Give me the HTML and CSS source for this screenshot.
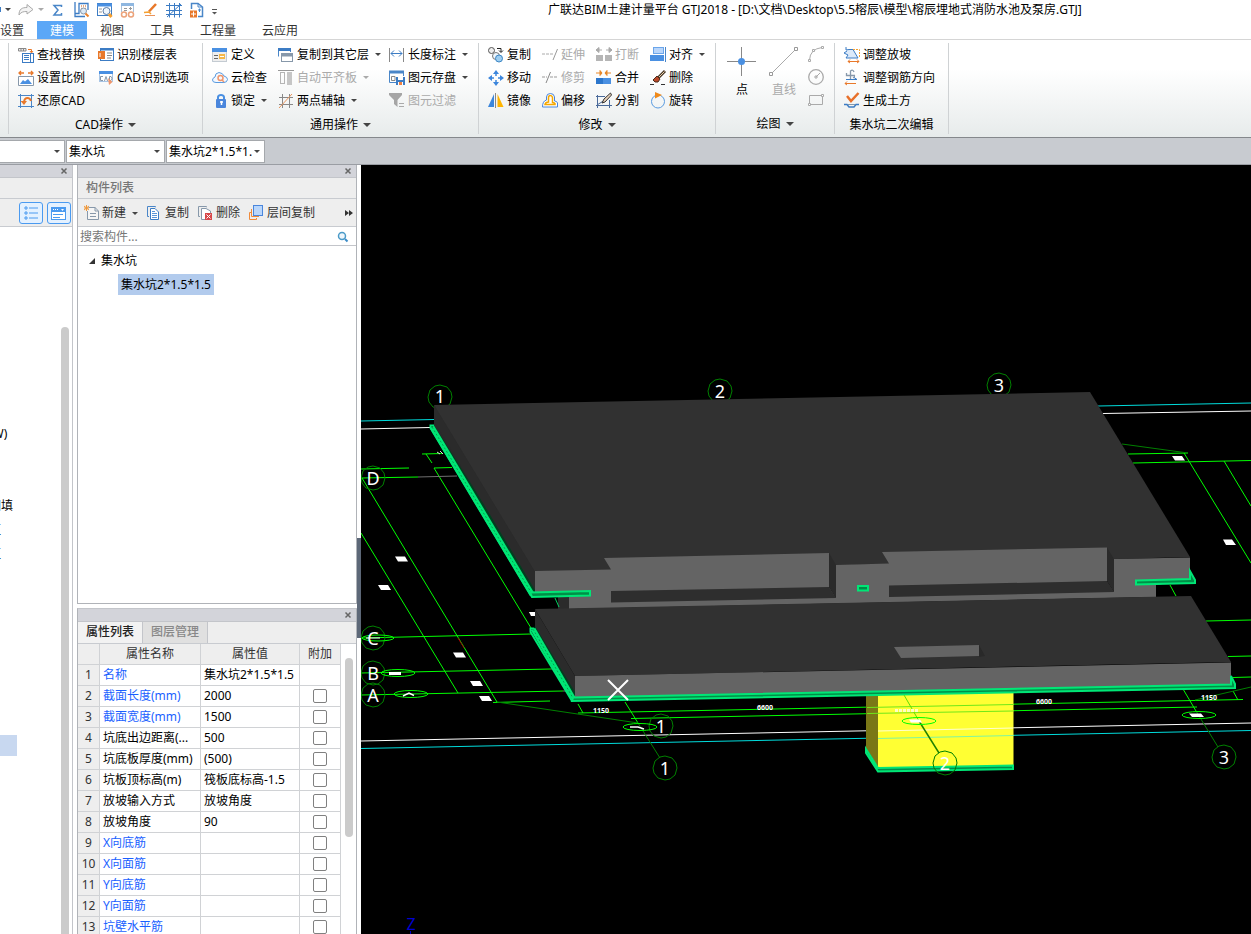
FILE: index.html
```html
<!DOCTYPE html>
<html lang="zh-CN">
<head>
    <meta charset="UTF-8">
    <meta name="viewport" content="width=device-width, initial-scale=1.0">
    <title>广联达BIM土建计量平台 GTJ2018</title>
    <link rel="stylesheet" href="styles.css">
</head>
<body>

<header class="titlebar">
    <div class="quick">
        <span class="sliver"></span>
        <span class="caret"></span>
        <button type="button" aria-label="重做"><svg class="icon" viewBox="0 0 16 16"><path d="M1 13C1 7 4 5.500 9 5.500V2.500L15 7.500L9 12V9.500C5 9.500 3 10 1 13Z" fill="#f4f4f4" stroke="#aaa"/></svg></button>
        <span class="caret light"></span>
        <button type="button" class="sum" aria-label="汇总"><svg class="icon" viewBox="0 0 16 16"><path d="M10.500 5V3.500H3L7 8L3 13H10.500V11" fill="none" stroke="#4a86c8" stroke-width="1.500"/></svg></button>
        <button type="button" aria-label="查看计算式"><svg class="icon" viewBox="0 0 16 16"><path d="M1 0V14.500H11M1 11.500H5V1.500H14V8" fill="none" stroke="#3c7cc4" stroke-width="1.300"/><path d="M7 4H13M7 6.500H13" stroke="#d88d5a" stroke-width="1.500" stroke-dasharray="1 1"/><circle cx="9.500" cy="9" r="3" fill="#dce9f5" stroke="#8798aa"/><path d="M11.500 11.500L14.500 14.500" stroke="#f0832a" stroke-width="2"/></svg></button>
        <button type="button" aria-label="查看工程量"><svg class="icon" viewBox="0 0 16 16"><rect x=".5" y="1.500" width="14" height="12" fill="#fff" stroke="#3c7cc4"/><path d="M0 3H15" stroke="#4a90e2" stroke-width="3"/><path d="M2 7H5M2 10H5" stroke="#999"/><circle cx="9.500" cy="9" r="3.500" fill="#eef5fc" stroke="#5a7ca8"/><path d="M12 12L14.500 15" stroke="#f5a030" stroke-width="3"/></svg></button>
        <button type="button" aria-label="预览"><svg class="icon" viewBox="0 0 16 16"><path d="M1.500 10V1.500H13.500V10" fill="none" stroke="#a9c2db"/><path d="M1 2.500H14" stroke="#8fb7e0" stroke-width="3"/><path d="M4 6.500H7M4 8.500H7M9 6.500H12M10.500 5V8" stroke="#999"/><circle cx="4" cy="12.500" r="2.500" fill="#fff" stroke="#eba27a" stroke-width="1.500"/><circle cx="11" cy="12.500" r="2.500" fill="#fff" stroke="#eba27a" stroke-width="1.500"/></svg></button>
        <button type="button" aria-label="画笔"><svg class="icon" viewBox="0 0 16 16"><path d="M13 2L6 9.500" stroke="#e8782a" stroke-width="2.500"/><path d="M1 10.500L6 10L8 12" stroke="#f5a030" stroke-width="1.500" fill="none"/><path d="M2 13.500H12" stroke="#e9935c"/></svg></button>
        <button type="button" aria-label="轴网"><svg class="icon" viewBox="0 0 16 16"><path d="M3.500 1V15.500M8.500 1V15.500M13.500 1V15.500M0 3.500H16M0 8.500H16M0 12.500H16M1 15L15 2" stroke="#3c7cc4" fill="none"/></svg></button>
        <button type="button" aria-label="新建楼层"><svg class="icon" viewBox="0 0 16 16"><path d="M2.500 7V1.500H9L13.500 5V14.500H9" fill="#fff" stroke="#4a86c8" stroke-width="1.500"/><path d="M9 1V5H13M9 8H12M10.500 6.500V10" stroke="#4a86c8" fill="none"/><rect x="1" y="8.500" width="7" height="7" fill="#e8782a"/><path d="M2 12H7M4.500 9.500V14.500" stroke="#fff"/></svg></button>
        <button type="button" aria-label="更多"><svg class="icon" viewBox="0 0 16 16"><path d="M0 7.500H5" stroke="#555"/><path d="M0 10H5L2.500 12.500Z" fill="#555"/></svg></button>
    </div>
    <h1>广联达BIM土建计量平台 GTJ2018 - [D:\文档\Desktop\5.5榕辰\模型\榕辰埋地式消防水池及泵房.GTJ]</h1>
</header>

<nav class="tabs">
    <a href="#">设置</a>
    <a href="#" class="active">建模</a>
    <a href="#">视图</a>
    <a href="#">工具</a>
    <a href="#">工程量</a>
    <a href="#">云应用</a>
</nav>

<section class="ribbon">
    <div class="group edge"></div>

    <div class="group">
        <div class="tools cad">
            <button type="button"><svg class="icon" viewBox="0 0 16 16"><path d="M.5 1.500H8V4H.5ZM3 1.500V4M5.500 1.500V4" fill="#eee" stroke="#888"/><path d="M10 2.500H13.500V5M12 4L13.500 6L15 4" stroke="#e8782a" fill="none"/><rect x="4.500" y="6.500" width="11" height="9" fill="#fff" stroke="#3c7cc4"/><path d="M6 8.500H11M6 10.500H11M6 12.500H11M12.500 7V15" stroke="#3c7cc4"/></svg>查找替换</button>
            <button type="button"><svg class="icon" viewBox="0 0 16 16"><rect x="2.500" y="1.500" width="13" height="12" fill="#fff" stroke="#3c7cc4"/><path d="M2 2.500H16" stroke="#3c7cc4" stroke-width="2"/><path d="M9 6H14M9 8.500H14M9 11H13" stroke="#888"/><rect x="1" y="5" width="5" height="6" fill="#e8782a" stroke="#e8782a" stroke-width="2"/><path d="M2 6V10" stroke="#fff"/></svg>识别楼层表</button>
            <button type="button"><svg class="icon" viewBox="0 0 16 16"><path d="M1 3H6M10 3H15M3 1L1 3L3 5M13 1L15 3L13 5" stroke="#e8782a" stroke-width="1.300" fill="none"/><path d="M.5 6.500V15.500H15.500V6.500Z" fill="#fff" stroke="#8798aa"/><path d="M2 14L5 10L7 11.500L10 9L14 14Z" fill="#4a90e2"/></svg>设置比例</button>
            <button type="button"><svg class="icon" viewBox="0 0 16 16"><rect x="1.500" y="1.500" width="13" height="10" fill="#fff" stroke="#a9c6e6"/><path d="M1 2.500H15" stroke="#4a90e2" stroke-width="3"/><path d="M5 6.500H2.500V10.500H5M6.500 11L8 6.500L9.500 11M11.500 6.500V10.500H13L14 9V8L13 6.500Z" stroke="#8798aa" fill="none"/><path d="M10 8L14.500 12L11 15Z" fill="#f0966b"/></svg>CAD识别选项</button>
            <button type="button"><svg class="icon" viewBox="0 0 16 16"><path d="M2.500 1V15M13.500 1V15M0 2.500H16M0 13.500H16" stroke="#4a86c8"/><path d="M13 8Q12 5 9.500 5Q6.500 5 6 9" fill="none" stroke="#e8782a" stroke-width="2"/><path d="M2.500 8H9L6 12Z" fill="#e8782a"/></svg>还原CAD</button>
        </div>
        <button type="button" class="group-name">CAD操作<span class="caret big"></span></button>
    </div>

    <div class="group">
        <div class="tools common">
            <button type="button"><svg class="icon" viewBox="0 0 16 16"><rect x=".5" y="1.500" width="14" height="13" fill="#eee" stroke="#c4cbd2"/><rect x="0" y="1" width="15" height="4" fill="#4a90e2"/><path d="M2 8.500H6M2 11.500H6" stroke="#666"/><path d="M7 7H13V12H7Z" fill="#f5b84a"/><path d="M8 9.500H12" stroke="#fff"/></svg>定义</button>
            <button type="button"><svg class="icon" viewBox="0 0 16 16"><path d="M.5 9.500V1.500H12.500V5" fill="#fff" stroke="#4a86c8"/><path d="M0 2.500H13" stroke="#3c7cc4" stroke-width="3"/><rect x="3.500" y="6.500" width="11" height="8" fill="#fff" stroke="#8798aa"/><path d="M3 8H15" stroke="#8798aa" stroke-width="3"/></svg>复制到其它层<span class="caret"></span></button>
            <button type="button"><svg class="icon" viewBox="0 0 16 16"><path d="M.5 1V15M14.500 1V15" stroke="#888"/><path d="M2 6.500H13M5 3.500L2 6.500L5 9.500M10 3.500L13 6.500L10 9.500" stroke="#3c7cc4" fill="none"/></svg>长度标注<span class="caret"></span></button>
            <button type="button"><svg class="icon" viewBox="0 0 16 16"><path d="M4 12.500Q.5 12.500 .5 10Q.5 8 3 7Q3 3 7 2.500Q11 3 12 6Q15.500 7 15.500 9.500Q15 12.500 12 12.500Z" fill="#f4f9ff" stroke="#5a9be0"/><circle cx="8.500" cy="8" r="2.500" fill="none" stroke="#f0966b" stroke-width="1.500"/><path d="M10 10L12 12" stroke="#f0966b" stroke-width="1.500"/></svg>云检查</button>
            <button type="button" disabled><svg class="icon" viewBox="0 0 16 16"><path d="M0 .5H16" stroke="#999"/><rect x="2.500" y="2.500" width="4" height="11" fill="none" stroke="#b5b5b5"/><rect x="9" y="2" width="5" height="13" fill="#c6c6c6"/></svg>自动平齐板<span class="caret light"></span></button>
            <button type="button"><svg class="icon" viewBox="0 0 16 16"><path d="M7 12.500H.5V1.500H14.500V6" fill="#fff" stroke="#4a86c8"/><path d="M0 2H15" stroke="#4a86c8" stroke-width="3"/><path d="M2.500 6.500H6V10.500H2.500Z" fill="none" stroke="#888"/><rect x="7" y="7" width="9" height="8" fill="#3c7cc4"/><rect x="9" y="7" width="5" height="3" fill="#fff"/><rect x="9" y="12" width="5" height="3" fill="#fff"/><rect x="10" y="12" width="3" height="3" fill="#f08040"/></svg>图元存盘<span class="caret"></span></button>
            <button type="button"><svg class="icon" viewBox="0 0 16 16"><path d="M6 7V4Q6.500 2 9 2Q11.500 2 12 4V7" fill="none" stroke="#4a90e2" stroke-width="2"/><rect x="4" y="6" width="10" height="9" rx="1" fill="#4a86dc"/><path d="M9.500 8V12M8 9H11" stroke="#fff" stroke-width="1.500"/></svg>锁定<span class="caret"></span></button>
            <button type="button"><svg class="icon" viewBox="0 0 16 16"><path d="M4.500 1V15M11.500 1V15M1 4.500H15M1 11.500H15" stroke="#888"/><path d="M1 15L14 1" stroke="#e8945c"/></svg>两点辅轴<span class="caret"></span></button>
            <button type="button" disabled><svg class="icon" viewBox="0 0 16 16"><path d="M0 0H13V2L8.500 7V14L5 11V7L0 2Z" fill="#a5a5a5"/><path d="M10 10.500H15M10 13.500H15" stroke="#aaa"/></svg>图元过滤</button>
        </div>
        <button type="button" class="group-name">通用操作<span class="caret big"></span></button>
    </div>

    <div class="group">
        <div class="tools modify">
            <button type="button"><svg class="icon" viewBox="0 0 16 16"><circle cx="3.500" cy="3.500" r="3" fill="#eee" stroke="#555"/><path d="M9 1.500H13V5M11 3.500L13 5.500L15 3.500" fill="none" stroke="#222"/><circle cx="8" cy="9" r="3.500" fill="#eef6fd" stroke="#777"/><circle cx="11" cy="11.500" r="3.500" fill="#9dcdf0" stroke="#3c86c4"/></svg>复制</button>
            <button type="button" disabled><svg class="icon" viewBox="0 0 16 16"><path d="M0 7H11" stroke="#aaa" stroke-dasharray="3 1"/><path d="M11 13L15.500 2" stroke="#999"/></svg>延伸</button>
            <button type="button" disabled><svg class="icon" viewBox="0 0 16 16"><path d="M0 3H6M10 3H16M3 .5L0 3L3 5.500ZM13 .5L16 3L13 5.500Z" stroke="#aaa" fill="#aaa"/><rect x="0" y="8" width="7" height="6" fill="#b5b5b5"/><rect x="9" y="8" width="7" height="6" fill="#b5b5b5"/></svg>打断</button>
            <button type="button"><svg class="icon" viewBox="0 0 16 16"><path d="M15.500 0V15" stroke="#4a86c8"/><rect x="3.500" y=".5" width="10" height="6" fill="#b9d6fb" stroke="#6aa5ea"/><rect x="0" y="8" width="14" height="6" fill="#4a90e2"/></svg>对齐<span class="caret"></span></button>
            <button type="button"><svg class="icon" viewBox="0 0 16 16"><path d="M8 0L11 4H5ZM8 16L5 12H11ZM0 8L4 5V11ZM16 8L12 11V5Z" fill="#3c86dc"/><path d="M8 3V6M8 10V13M3 8H6M10 8H13" stroke="#3c86dc" stroke-width="1.500"/></svg>移动</button>
            <button type="button" disabled><svg class="icon" viewBox="0 0 16 16"><path d="M0 7H5M8 7H16" stroke="#999" stroke-dasharray="3 1"/><path d="M4 13L8.500 2" stroke="#888"/></svg>修剪</button>
            <button type="button"><svg class="icon" viewBox="0 0 16 16"><path d="M0 3H6M9 3H15M4 .5L6 3L4 5.500ZM11 .5L9 3L11 5.500Z" stroke="#e8882a" fill="#e8882a"/><rect x="0" y="8" width="7" height="6" fill="#2c76cc"/><rect x="7" y="8" width="8" height="6" fill="#4a90e2"/></svg>合并</button>
            <button type="button"><svg class="icon" viewBox="0 0 16 16"><path d="M15 1L8 8" stroke="#4a3a2a" stroke-width="3"/><path d="M14.500 1.500L8 8" stroke="#e8d0a8"/><path d="M7 6L10 9L8 12L5 12L3 10Z" fill="#b8492a" stroke="#4a2a1a"/><path d="M0 14.500H4M11 14.500H15" stroke="#333"/></svg>删除</button>
            <button type="button"><svg class="icon" viewBox="0 0 16 16"><path d="M6 1V14H0Z" fill="#3c86dc"/><path d="M9.500 1V14H15.500Z" fill="#ffb400"/><path d="M7.500 0V15" stroke="#888"/></svg>镜像</button>
            <button type="button"><svg class="icon" viewBox="0 0 16 16"><path d="M.5 14H15.500V10Q15 8 12.500 8V4Q12 .5 8.500 .5Q4.500 .5 4.500 4V7Q.5 8 .5 14Z" fill="#fff" stroke="#4a86dc"/><path d="M3 11.500H13V10.500Q12 9.500 10.500 9.500V4.500Q10 2.500 8.500 2.500Q6.500 2.500 6.500 4.500V9Q3.500 9 3 11.500Z" fill="#fff" stroke="#f5a800" stroke-width="1.500"/></svg>偏移</button>
            <button type="button"><svg class="icon" viewBox="0 0 16 16"><path d="M0 3.500H9M1.500 2V15M0 12.500H16M13.500 7V15" stroke="#4a6a9a"/><path d="M1 12L12 5" stroke="#4a6a9a"/><path d="M14.500 0L8 6L6 10L9 9L15.500 2Z" fill="#e8d0b8" stroke="#333"/></svg>分割</button>
            <button type="button"><svg class="icon" viewBox="0 0 16 16"><circle cx="8" cy="8.500" r="6.500" fill="none" stroke="#5a9be0"/><path d="M5 -1L12 2L5 5.500Z" fill="#f08a1a"/></svg>旋转</button>
        </div>
        <button type="button" class="group-name">修改<span class="caret big"></span></button>
    </div>

    <div class="group">
        <div class="draw">
            <button type="button" class="tall"><svg viewBox="0 0 30 30"><path d="M14.500 0V29M0 14.500H29" stroke="#888"/><circle cx="14.500" cy="14.500" r="3.500" fill="#4a90e2"/></svg>点</button>
            <button type="button" class="tall" disabled><svg viewBox="0 0 30 30"><path d="M3 26L26 3" stroke="#aaa"/><path d="M.5 25.500H3.500V28.500H.5ZM25.500 .5H28.500V3.500H25.500Z" fill="#fff" stroke="#999"/></svg>直线</button>
            <div class="shapes">
                <button type="button" aria-label="弧" disabled><svg class="icon" viewBox="0 0 16 16"><path d="M1.500 14Q2 3 14 1.500" fill="none" stroke="#aaa"/><path d="M.5 13.500H2.500V15.500H.5ZM4.500 3.500H6.500V5.500H4.500ZM13.500 .5H15.500V2.500H13.500Z" fill="#fff" stroke="#aaa"/></svg></button>
                <button type="button" aria-label="圆" disabled><svg class="icon" viewBox="0 0 16 16"><circle cx="8" cy="8" r="7.300" fill="none" stroke="#aaa" stroke-width="1.300"/><path d="M8 8L12 4M7 7H9V9H7Z" fill="none" stroke="#aaa"/></svg></button>
                <button type="button" aria-label="矩形" disabled><svg class="icon" viewBox="0 0 16 16"><path d="M1.500 3.500H14.500V12.500H1.500Z" fill="none" stroke="#aaa"/><path d="M.5 11.500H2.500V13.500H.5ZM13.500 2.500H15.500V4.500H13.500Z" fill="#fff" stroke="#aaa"/></svg></button>
            </div>
        </div>
        <button type="button" class="group-name">绘图<span class="caret big"></span></button>
    </div>

    <div class="group">
        <div class="tools pit">
            <button type="button"><svg class="icon" viewBox="0 0 16 16"><path d="M2 0V3L5 2.500H9L14 11H2L4 8L0 6L3 4" fill="#dceafa" stroke="#3c7cc4"/><path d="M9 2.500H15.500V11" fill="none" stroke="#f5a030" stroke-dasharray="2 1"/><path d="M4 14.500H15M13 12.500L15 14.500L13 16M6 12.500L4 14.500L6 16" fill="none" stroke="#e8782a"/></svg>调整放坡</button>
            <button type="button"><svg class="icon" viewBox="0 0 16 16"><path d="M6.500 9V1Q9 -1 10 2M2.500 3V5.500H10.500Q11 7 9 8" fill="none" stroke="#8798aa" stroke-width="1.300"/><path d="M2 9.500H13M10 7.500L13 9.500" fill="none" stroke="#3c7cc4"/><path d="M1 13.500H12M3 11.500L1 13.500L3 15" fill="none" stroke="#e8782a"/></svg>调整钢筋方向</button>
            <button type="button"><svg class="icon" viewBox="0 0 16 16"><path d="M3 3L7 8L14.500 0" fill="none" stroke="#e8702a" stroke-width="2.500"/><path d="M0 11.500H3L5 14H10L12 11.500H15" fill="none" stroke="#3c7cc4" stroke-width="1.500"/><path d="M4 11.500H11" stroke="#8798aa"/></svg>生成土方</button>
        </div>
        <div class="group-name">集水坑二次编辑</div>
    </div>
</section>

<div class="pickers">
    <label class="picker first"><select aria-label="楼层"><option></option></select><span class="caret"></span></label>
    <label class="picker"><select aria-label="构件类型"><option>集水坑</option></select><span class="caret"></span></label>
    <label class="picker"><select aria-label="构件"><option>集水坑2*1.5*1.5</option></select><span class="caret"></span></label>
</div>

<main>
    <aside class="nav-panel">
        <div class="strip"><button type="button" aria-label="关闭"><svg viewBox="0 0 8 8"><path d="M1.500 1.500L6.500 6.500M6.500 1.500L1.500 6.500" stroke="#666" stroke-width="1.500"/></svg></button></div>
        <div class="panel-title"></div>
        <div class="view-switch">
            <button type="button" aria-label="列表"><svg class="icon" viewBox="0 0 16 16"><path d="M2 2H4V4H2ZM2 7H4V9H2ZM2 12H4V14H2Z" fill="none" stroke="#4a9af0"/><path d="M6 3H15M6 8H15M6 13H15" stroke="#4a9af0"/></svg></button>
            <button type="button" aria-label="卡片"><svg class="icon" viewBox="0 0 16 16"><rect x=".5" y="2.500" width="14" height="12" fill="#fff" stroke="#4a9af0"/><rect x="0" y="2" width="15" height="5" fill="#4a9af0"/><path d="M2 4.500H8" stroke="#fff" stroke-dasharray="1 1"/><path d="M10 4H13L11.500 6Z" fill="#fff"/><path d="M2 9.500H12M2 12.500H9" stroke="#4a9af0"/></svg></button>
        </div>
        <div class="nav-body">
            <ul class="nav-list">
                <li>(W)</li>
                <li></li>
                <li></li>
                <li>回填</li>
                <li>区</li>
                <li>区</li>
            </ul>
            <div class="nav-current"></div>
            <div class="nav-scroll"></div>
        </div>
    </aside>

    <div class="middle">
        <section class="components">
            <div class="strip"><button type="button" aria-label="关闭"><svg viewBox="0 0 8 8"><path d="M1.500 1.500L6.500 6.500M6.500 1.500L1.500 6.500" stroke="#666" stroke-width="1.500"/></svg></button></div>
            <h2 class="panel-title">构件列表</h2>
            <div class="toolbar">
                <button type="button"><svg class="icon" viewBox="0 0 16 16"><path d="M4.500 2.500H11L14.500 6V14.500H3.500V6" fill="#f5f5f5" stroke="#8798aa"/><path d="M11 2V6H14M6 8.500H12M6 11.500H12" stroke="#8798aa" fill="none"/><path d="M0 1L5 5M5 1L0 5M2.500 0V6M0 3H5" stroke="#f0983a"/></svg>新建<span class="caret"></span></button>
                <button type="button"><svg class="icon" viewBox="0 0 16 16"><path d="M2 11.500H.5V1.500H8L9 2" fill="none" stroke="#4a86c8"/><path d="M3.500 3.500H8L11.500 7V14.500H3.500Z" fill="#fff" stroke="#3c7cc4"/><path d="M5 6.500H8M5 8.500H10M5 10.500H10M5 12.500H10" stroke="#5a96d8"/></svg>复制</button>
                <button type="button"><svg class="icon" viewBox="0 0 16 16"><path d="M2 11.500H.5V1.500H8L9 2" fill="none" stroke="#8798aa"/><path d="M7 14.500H3.500V3.500H8L12.500 6V8" fill="#fff" stroke="#8798aa"/><rect x="7" y="8" width="7" height="7" fill="#d8474a"/><path d="M8.500 9.500L12.500 13.500M12.500 9.500L8.500 13.500" stroke="#fff"/></svg>删除</button>
                <button type="button"><svg class="icon" viewBox="0 0 16 16"><path d="M3 7.500H.5V14.500H7.500V13" fill="none" stroke="#f08a3a"/><path d="M2.500 4V11.500H10" fill="none" stroke="#f08a3a"/><rect x="4.500" y=".5" width="9" height="10" fill="#b9d6fb" stroke="#4a86dc"/></svg>层间复制</button>
                <button type="button" class="more" aria-label="更多"><svg viewBox="0 0 8 8"><path d="M0 1L4 4L0 7ZM4 1L8 4L4 7Z" fill="#333"/></svg></button>
            </div>
            <div class="search">
                <input type="text" placeholder="搜索构件..." aria-label="搜索构件">
                <svg viewBox="0 0 12 12"><circle cx="5" cy="5" r="3.500" fill="#eef6fc" stroke="#4a9ac8" stroke-width="1.500"/><path d="M8 8L10.500 10.500" stroke="#3c8cc8" stroke-width="2"/></svg>
            </div>
            <ul class="tree">
                <li><svg viewBox="0 0 8 8"><path d="M7 1V7H1Z" fill="#333"/></svg>集水坑</li>
                <li class="leaf"><span>集水坑2*1.5*1.5</span></li>
            </ul>
        </section>

        <section class="properties">
            <div class="strip"><button type="button" aria-label="关闭"><svg viewBox="0 0 8 8"><path d="M1.500 1.500L6.500 6.500M6.500 1.500L1.500 6.500" stroke="#666" stroke-width="1.500"/></svg></button></div>
            <div class="prop-tabs">
                <button type="button" class="active">属性列表</button>
                <button type="button">图层管理</button>
            </div>
            <div class="prop-body">
                <table>
                    <thead>
                        <tr><th class="num"></th><th class="name">属性名称</th><th class="value">属性值</th><th class="extra">附加</th></tr>
                    </thead>
                    <tbody>
                        <tr><th>1</th><td class="blue">名称</td><td>集水坑2*1.5*1.5</td><td></td></tr>
                        <tr><th>2</th><td class="blue">截面长度(mm)</td><td>2000</td><td><input type="checkbox" aria-label="截面长度"></td></tr>
                        <tr><th>3</th><td class="blue">截面宽度(mm)</td><td>1500</td><td><input type="checkbox" aria-label="截面宽度"></td></tr>
                        <tr><th>4</th><td>坑底出边距离(...</td><td>500</td><td><input type="checkbox" aria-label="坑底出边距离"></td></tr>
                        <tr><th>5</th><td>坑底板厚度(mm)</td><td>(500)</td><td><input type="checkbox" aria-label="坑底板厚度"></td></tr>
                        <tr><th>6</th><td>坑板顶标高(m)</td><td>筏板底标高-1.5</td><td><input type="checkbox" aria-label="坑板顶标高"></td></tr>
                        <tr><th>7</th><td>放坡输入方式</td><td>放坡角度</td><td><input type="checkbox" aria-label="放坡输入方式"></td></tr>
                        <tr><th>8</th><td>放坡角度</td><td>90</td><td><input type="checkbox" aria-label="放坡角度"></td></tr>
                        <tr><th>9</th><td class="blue">X向底筋</td><td></td><td><input type="checkbox" aria-label="X向底筋"></td></tr>
                        <tr><th>10</th><td class="blue">X向面筋</td><td></td><td><input type="checkbox" aria-label="X向面筋"></td></tr>
                        <tr><th>11</th><td class="blue">Y向底筋</td><td></td><td><input type="checkbox" aria-label="Y向底筋"></td></tr>
                        <tr><th>12</th><td class="blue">Y向面筋</td><td></td><td><input type="checkbox" aria-label="Y向面筋"></td></tr>
                        <tr><th>13</th><td class="blue">坑壁水平筋</td><td></td><td><input type="checkbox" aria-label="坑壁水平筋"></td></tr>
                    </tbody>
                </table>
                <div class="prop-scroll"></div>
            </div>
        </section>
    </div>

    <div class="splitter"><button type="button" aria-label="折叠"></button></div>

    <svg class="scene" viewBox="361 165 890 769" preserveAspectRatio="xMinYMin slice">
        <defs>
            <path id="ring" d="M0 -12L7 -10L11 -5L12 0L10 7L5 11L0 12L-7 10L-11 5L-12 0L-10 -7L-5 -11Z"/>
        </defs>

        <!-- site lines -->
        <g fill="none">
            <path d="M361 421L434 419.500M1098 406L1251 403M361 748.500L1251 730.500" stroke="#00dcdc"/>
            <path d="M361 429L430 427.500M1103 413.500L1251 411M361 741L1251 723" stroke="#fff"/>
        </g>

        <!-- axes and dimension lines -->
        <g class="axis">
            <path d="M361 469L409 468M361 478L418 477M422 454L443 453.500M426 454L432 463M434 468L452 467.500M434 468L531 628"/>
            <path d="M362 478L497 702M361 533L458 693M361 638L531 634M361 673L551 669M361 695L563 691M493 702.500L550 701"/>
            <path d="M1128 454L1188 453M1133 463L1251 460.500M1184 453L1251 563M1224 461L1251 506M1170 585L1176 596"/>
            <path d="M1206 621L1251 620M1228 656.500L1251 656M1233 677.500L1251 677M1233 691L1238 700"/>
            <path d="M578 704L583 713M578 713L1243 699.500M631 718.500L1197 707M625 702L638 723M1183 689L1196 711"/>
        </g>
        <g class="axis dark">
            <path d="M497 702L638 723M1122 444L1188 453M1195 700L1251 687M638 723L660 758M1196 711L1218 747"/>
            <path d="M418 477L457 476M551 669H556M563 691H568" stroke="#707070"/>
            <path d="M458 638L464 648" stroke="#900"/>
        </g>

        <g class="bubble">
            <use href="#ring" x="440" y="397"/><use href="#ring" x="720" y="391"/><use href="#ring" x="999" y="385"/>
            <use href="#ring" x="373" y="478"/><use href="#ring" x="373" y="638"/><use href="#ring" x="373" y="673"/><use href="#ring" x="373" y="695"/>
            <use href="#ring" x="661" y="726"/><use href="#ring" x="665" y="768"/><use href="#ring" x="1224" y="757"/>
        </g>

        <!-- pump room slab -->
        <path d="M434 405V426L536 597L569 591V571Z" fill="#2a2a2a"/>
        <path d="M434 425L432 428L532 596H535V585Z" fill="#00401f"/>
        <path d="M434 405L1090 392L1190 557L1114 559L535 572Z" fill="#313131"/>
        <path d="M434 405L535 572V590L434 421Z" fill="#2b2b2b"/>
        <path d="M558 596H569V609H558Z" fill="#2b2b2b"/>
        <path d="M555 598L559 607" stroke="#00d060" fill="none"/>
        <path d="M535 571L611 569.500L604 558L829 553V587L836 598V565L889 563.500L882 552L1107 547.500V582L1114 592V559L1190 557.500V580L1156 585V597L569 609V595L535 593Z" fill="#646464"/>
        <path d="M829 553L836 565V598L829 587Z M1107 547.500L1114 559V592L1107 581Z" fill="#2a2a2a"/>
        <path d="M611 591L829 587L836 598L611 602.500ZM889 585.500L1107 581L1114 592L889 597Z" fill="#2e2e2e"/>
        <path class="band" d="M432 427L532 594"/>
        <path class="band speckle" d="M432 427L532 594"/>
        <path class="edge-line" d="M434 425.500H430.500V428L531 596"/>
        <path class="edge" d="M530 592.500L590 591V595.500L532 597Z"/>
        <path class="edge" d="M858 586H868V590.500H858Z"/>
        <path class="edge" d="M1136 580.500L1190 579V571L1195 580V583L1136 584.500Z"/>

        <!-- tank slab -->
        <path d="M535 609L575 676V697L535 630Z" fill="#2b2b2b"/>
        <path d="M535 626L575 692V698L533 631Z" fill="#00401f"/>
        <path d="M535 609L1191 596L1231 662L575 676Z" fill="#313131"/>
        <path d="M575 676L1231 662.500V685L575 698Z" fill="#646464"/>
        <path d="M894 647L979 645V656L901 658Z" fill="#646464"/>
        <path d="M979 645L985 656L979 657Z" fill="#292929"/>
        <path class="band" d="M533 629L573 698"/>
        <path class="band speckle" d="M533 629L573 698"/>
        <path class="edge-line" d="M534 628.500H530.500V632L572 701"/>

        <!-- sump -->
        <path d="M866 696H878V767L866 748Z" fill="#7a7716"/>
        <path d="M878 694L1013.500 692V766L878 768Z" fill="#ffff33"/>
        <path class="edge" d="M866 749L878 768L1013 765.500V769L878 771.500L866 753Z"/>
        <path class="edge" d="M573 697.500L1231 684.500V676L1235 684V688L572 701Z"/>
        <g fill="none">
            <path d="M867 707.500L1013 704.500M867 713.500L1013 711" stroke="#70e818"/>
            <path d="M878 731L1013 728" stroke="#ffffd0"/>
            <path d="M878 738.500L1013 735.500" stroke="#80f5a0"/>
            <path d="M904 695L919 721" stroke="#60e000"/>
            <path d="M919 721L939 753" stroke="#208000" stroke-width="1.500"/>
        </g>
        <g class="bubble"><use href="#ring" x="945" y="763"/></g>

        <g class="mark">
            <ellipse cx="378" cy="638" rx="16" ry="3"/><ellipse cx="398" cy="673" rx="17" ry="3.500"/><ellipse cx="411" cy="694" rx="17" ry="3.500"/>
            <ellipse cx="640" cy="727" rx="17" ry="3.500"/><ellipse cx="919" cy="721" rx="17" ry="3.500"/><ellipse cx="1199" cy="715" rx="17" ry="3.500"/>
        </g>

        <g fill="#fff">
            <path d="M395 556.500H405L408 561.500H398ZM378 585H388L391 590H381ZM453 652.500H463L466 657.500H456ZM470 681H480L483 686H473ZM479 696H489L492 701H482ZM529 612H535V616H531ZM1172 456H1182L1185 460.500H1175ZM1223 539.500H1232L1236 545H1226Z"/>
            <path d="M389 672H401V675H389ZM909 719.500H920L922 722.500H911ZM1189 713.500H1201L1204 717H1192Z"/>
            <path d="M403 696L409 693L414 695.500M630 727H638L644 729" fill="none" stroke="#fff" stroke-width="1.500"/>
            <path d="M366 638H380" stroke="#fff"/>
            <path d="M437 452L440 454M440 451L443 454" stroke="#ddd"/>
            <path d="M895 710.500H918" stroke="#ffffc0" stroke-width="3" stroke-dasharray="3 1"/>
        </g>
        <g class="dims">
            <text x="601" y="713">1150</text>
            <text x="765" y="710">6600</text>
            <text x="1044" y="704">6600</text>
            <text x="1209" y="700">1150</text>
        </g>

        <g class="labels">
            <text x="440" y="403">1</text><text x="720" y="398">2</text><text x="999" y="392">3</text>
            <text x="373" y="485">D</text><text x="373" y="645">C</text><text x="373" y="680">B</text><text x="373" y="702">A</text>
            <text x="661" y="733">1</text><text x="665" y="775">1</text><text x="945" y="770">2</text><text x="1224" y="764">3</text>
            <text x="411" y="930" class="z">Z</text>
        </g>
        <path d="M608 680L628 700M628 680L608 700" stroke="#fff" stroke-width="2"/>
        <path d="M410.500 931V934" stroke="#0000d0"/>
    </svg>
</main>

</body>
</html>
```

FILE: styles.css
```css
* {
    box-sizing: border-box;
}
body {
    margin: 0;
    height: 100vh;
    display: flex;
    flex-direction: column;
    overflow: hidden;
    font: 12px/16px "Noto Sans", "Noto Sans CJK SC", sans-serif;
    color: #000;
    background: #fff;
}
button {
    display: flex;
    align-items: center;
    padding: 0;
    border: 0;
    background: none;
    font: inherit;
    color: inherit;
    white-space: nowrap;
}
button:disabled {
    color: #aaa;
}
h1, h2, ul {
    margin: 0;
    padding: 0;
    font-size: 12px;
    font-weight: normal;
    list-style: none;
}
svg {
    display: block;
    flex: none;
}
.icon {
    width: 16px;
    height: 16px;
    overflow: visible;
}
.caret {
    flex: none;
    border: 3px solid transparent;
    border-top-color: #444;
    border-bottom: 0;
}
.caret.light {
    border-top-color: #aaa;
}
.caret.big {
    border-width: 4px 4px 0;
    margin-left: 5px;
}

/* title bar */
.titlebar {
    display: flex;
    align-items: center;
    flex: none;
    height: 20px;
    padding-bottom: 1px;
}
.quick {
    display: flex;
    align-items: center;
    gap: 7px;
    flex: none;
    width: 548px;
}
.quick .sliver {
    width: 1px;
    height: 5px;
    margin-right: -3px;
    background: #3c7cc4;
}
.quick .caret.light {
    margin-left: -3px;
}
.titlebar h1 {
    white-space: nowrap;
}

/* ribbon tabs */
.tabs {
    display: flex;
    flex: none;
    height: 20px;
    padding-top: 1px;
    margin-left: -13px;
    border-bottom: 1px solid #d5d5d5;
}
.tabs a {
    padding: 0 13px;
    line-height: 19px;
    color: #333;
    text-decoration: none;
}
.tabs a.active {
    background: #5ba7f7;
    color: #fff;
}

/* ribbon */
.ribbon {
    display: flex;
    flex: none;
    height: 98px;
    padding: 3px 0;
    background: linear-gradient(#fff 30%, #e7ebeb);
    border-bottom: 1px solid #85888c;
}
.group {
    display: flex;
    flex-direction: column;
    border-right: 1px solid #cfd2d4;
}
.group.edge {
    width: 9px;
}
.tools {
    display: grid;
    grid-auto-rows: 23px;
    padding: 0 7px 0 9px;
}
.tools button {
    gap: 3px;
}
.tools .caret {
    margin-left: 3px;
}
.cad {
    grid-template-columns: 80px 97px;
}
.common {
    grid-template-columns: 66px 111px 82px;
}
.modify {
    grid-template-columns: 54px 54px 54px 58px;
}
.pit {
    grid-template-columns: 97px;
}
.group-name {
    display: flex;
    align-items: center;
    justify-content: center;
    height: 24px;
    padding-top: 3px;
}
.draw {
    display: flex;
    gap: 12px;
    height: 69px;
    padding: 4px 10px 0 11px;
}
.tall {
    flex-direction: column;
    gap: 5px;
}
.tall svg {
    width: 30px;
    height: 30px;
}
.shapes {
    display: flex;
    flex-direction: column;
    gap: 7px;
    margin: -1px 0 0 -3px;
}

/* floor and component pickers */
.pickers {
    display: flex;
    flex: none;
    gap: 1px;
    height: 27px;
    padding-top: 2px;
    background: #c8cbd0;
    border-bottom: 1px solid #9a9da3;
}
.picker {
    position: relative;
    width: 99px;
    height: 23px;
}
.picker.first {
    width: 65px;
}
.picker select {
    width: 100%;
    height: 100%;
    padding: 0 12px 0 2px;
    border: 1px solid #a5a8ac;
    border-radius: 0;
    background: #fff;
    font: inherit;
    appearance: none;
}
.picker.first select {
    border-left: 0;
}
.picker .caret {
    position: absolute;
    right: 5px;
    top: 10px;
}

/* docked panels */
main {
    display: flex;
    flex: 1;
    min-height: 0;
}
.strip {
    display: flex;
    flex: none;
    justify-content: flex-end;
    height: 13px;
    padding-right: 4px;
    background: #d3d4da;
    border-bottom: 1px solid #c3c5ca;
}
.strip svg {
    width: 8px;
    height: 8px;
}
.panel-title {
    flex: none;
    height: 21px;
    padding-left: 8px;
    line-height: 20px;
    font-weight: 500;
    color: #777;
    background: #eee;
    border-bottom: 1px solid #c8cbd0;
}
.nav-panel {
    display: flex;
    flex-direction: column;
    flex: none;
    width: 73px;
    overflow: hidden;
    border-right: 1px solid #c3c5ca;
}
.view-switch {
    display: flex;
    flex: none;
    justify-content: flex-end;
    gap: 4px;
    height: 28px;
    padding: 3px 1px;
    background: #eee;
    border-bottom: 1px solid #c8cbd0;
}
.view-switch button {
    justify-content: center;
    width: 24px;
    height: 22px;
    border: 1px solid #4a9af0;
    border-radius: 3px;
    background: #e4f1ff;
}
.nav-body {
    position: relative;
    flex: 1;
    padding-top: 195px;
}
.nav-list {
    margin-left: -11px;
}
.nav-list li {
    height: 24px;
    line-height: 24px;
}
.nav-current {
    width: 17px;
    height: 21px;
    margin-top: 169px;
    background: #c8d8f0;
}
.nav-scroll {
    position: absolute;
    top: 100px;
    bottom: 0;
    right: 3px;
    width: 8px;
    border-radius: 4px 4px 0 0;
    background: #cbcbcb;
}
.middle {
    display: flex;
    flex-direction: column;
    flex: none;
    gap: 4px;
    width: 280px;
    margin-left: 4px;
}
.components, .properties {
    display: flex;
    flex-direction: column;
    min-height: 0;
    overflow: hidden;
    border: 1px solid #b0b3b8;
    border-top: 0;
}
.components {
    flex: 35;
}
.properties {
    flex: 26;
    border-top: 1px solid #c3c5ca;
    border-bottom: 0;
}
.toolbar {
    display: flex;
    align-items: center;
    flex: none;
    gap: 9px;
    height: 28px;
    padding: 1px 3px 0 6px;
    background: #eee;
    color: #333;
    border-bottom: 1px solid #c8cbd0;
}
.toolbar button {
    gap: 2px;
}
.toolbar .caret {
    margin-left: 4px;
}
.toolbar .more {
    margin-left: auto;
}
.toolbar .more svg {
    width: 8px;
    height: 8px;
}
.search {
    display: flex;
    align-items: center;
    flex: none;
    height: 19px;
    padding: 1px 7px 0 0;
    border-bottom: 1px solid #c3c5ca;
}
.search input {
    flex: 1;
    min-width: 0;
    padding: 0 2px;
    border: 0;
    font: inherit;
}
.search input::placeholder {
    color: #777;
}
.search svg {
    width: 12px;
    height: 12px;
}
.tree {
    padding: 3px 10px;
}
.tree li {
    display: flex;
    align-items: center;
    gap: 5px;
    height: 24px;
}
.tree svg {
    width: 8px;
    height: 8px;
}
.tree .leaf {
    height: 22px;
    padding-left: 30px;
}
.leaf span {
    padding: 0 3px;
    line-height: 21px;
    background: #b2cbed;
}

/* property list */
.prop-tabs {
    display: flex;
    flex: none;
    height: 22px;
    background: #eee;
    border-bottom: 1px solid #c8cbd0;
}
.prop-tabs button {
    padding: 0 8px;
    font-weight: 500;
    color: #888;
    background: #e0e0e0;
    border-right: 1px solid #c3c5ca;
}
.prop-tabs .active {
    color: #222;
    background: #f2f2f2;
}
.prop-body {
    display: flex;
    align-items: flex-start;
    flex: 1;
    min-height: 0;
}
table {
    width: 263px;
    table-layout: fixed;
    border-collapse: separate;
    border-spacing: 0;
}
th, td {
    height: 21px;
    padding: 0 3px;
    line-height: 20px;
    text-align: left;
    white-space: nowrap;
    overflow: hidden;
    border-right: 1px solid #d0d2d5;
    border-bottom: 1px solid #d0d2d5;
}
th {
    padding: 0;
    text-align: center;
    font-weight: normal;
    color: #333;
    background: #eee;
}
.num {
    width: 22px;
}
.name {
    width: 101px;
}
.value {
    width: 99px;
}
.extra {
    width: 41px;
}
td.blue {
    color: #1a5fff;
}
td:last-child {
    padding: 0;
}
td input {
    display: block;
    width: 14px;
    height: 14px;
    margin: 0 auto;
    border: 1px solid #808080;
    border-radius: 2px;
    background: #fff;
    appearance: none;
}
.prop-scroll {
    width: 8px;
    height: 179px;
    margin: 14px 0 0 4px;
    border-radius: 4px;
    background: #cbcbcb;
}

/* splitter between panels and scene */
.splitter {
    display: flex;
    align-items: center;
    flex: none;
    width: 4px;
}
.splitter button {
    width: 4px;
    height: 100px;
    margin-top: 76px;
    background: #5d6878;
}

/* 3d scene */
.scene {
    flex: 1;
    min-width: 0;
    height: 100%;
    background: #000;
}
.axis {
    fill: none;
    stroke: #0f0;
}
.axis.dark {
    stroke: #008000;
}
.bubble {
    fill: none;
    stroke: #008000;
}
.mark {
    fill: none;
    stroke: #0f0;
}
.edge {
    fill: #008f48;
    stroke: #00e676;
    stroke-width: 2px;
}
.edge-line {
    fill: none;
    stroke: #00e676;
    stroke-width: 2px;
}
.band {
    fill: none;
    stroke: #00e676;
    stroke-width: 5px;
}
.band.speckle {
    stroke: #00a050;
    stroke-width: 1px;
    stroke-dasharray: 2px 2px;
}
.labels {
    fill: #fff;
    font-size: 18px;
    text-anchor: middle;
}
.labels .z {
    fill: #0000d0;
    font-size: 16px;
}
.dims {
    fill: #fff;
    font-size: 7px;
    font-weight: bold;
    text-anchor: middle;
}
```
